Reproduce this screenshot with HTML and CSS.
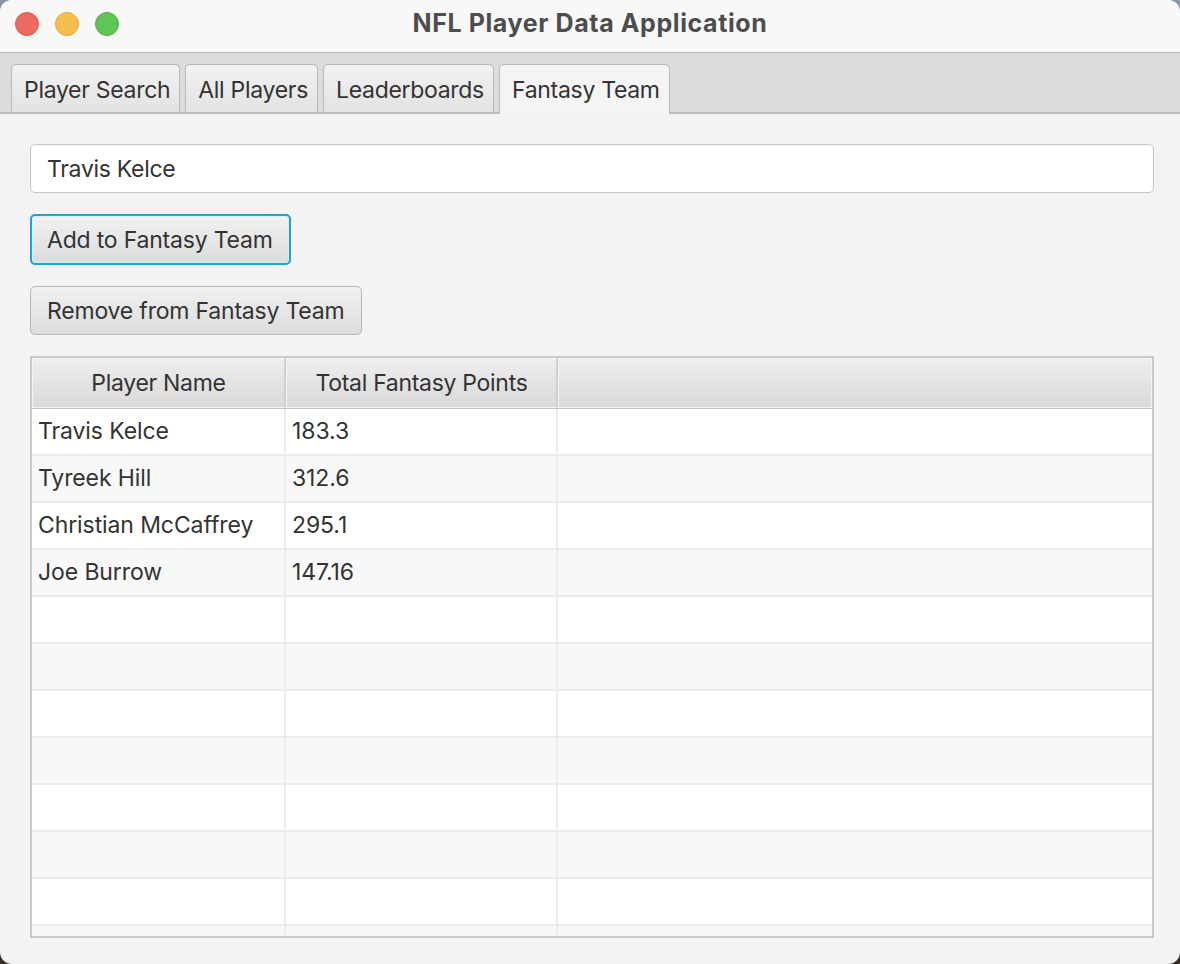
FILE: index.html
```html
<!DOCTYPE html>
<html>
<head>
<meta charset="utf-8">
<link rel="stylesheet" href="styles.css">
</head>
<body>
<div class="window">
  <div class="titlebar">
    <div class="lights">
      <span class="light red"></span>
      <span class="light yellow"></span>
      <span class="light green"></span>
    </div>
    <div class="title">NFL Player Data Application</div>
  </div>
  <div class="tabbar">
    <div class="tab">Player Search</div>
    <div class="tab">All Players</div>
    <div class="tab">Leaderboards</div>
    <div class="tab selected">Fantasy Team</div>
  </div>
  <div class="content">
    <div class="textfield">Travis Kelce</div>
    <div class="btn focused">Add to Fantasy Team</div>
    <div class="btn">Remove from Fantasy Team</div>
    <div class="table">
      <div class="thead">
        <div class="th c1">Player Name</div>
        <div class="th c2">Total Fantasy Points</div>
        <div class="th c3"></div>
      </div>
      <div class="tbody">
        <div class="tr"><div class="td c1">Travis Kelce</div><div class="td c2">183.3</div><div class="td c3"></div></div>
        <div class="tr"><div class="td c1">Tyreek Hill</div><div class="td c2">312.6</div><div class="td c3"></div></div>
        <div class="tr"><div class="td c1">Christian McCaffrey</div><div class="td c2">295.1</div><div class="td c3"></div></div>
        <div class="tr"><div class="td c1">Joe Burrow</div><div class="td c2">147.16</div><div class="td c3"></div></div>
        <div class="tr"><div class="td c1"></div><div class="td c2"></div><div class="td c3"></div></div>
        <div class="tr"><div class="td c1"></div><div class="td c2"></div><div class="td c3"></div></div>
        <div class="tr"><div class="td c1"></div><div class="td c2"></div><div class="td c3"></div></div>
        <div class="tr"><div class="td c1"></div><div class="td c2"></div><div class="td c3"></div></div>
        <div class="tr"><div class="td c1"></div><div class="td c2"></div><div class="td c3"></div></div>
        <div class="tr"><div class="td c1"></div><div class="td c2"></div><div class="td c3"></div></div>
        <div class="tr"><div class="td c1"></div><div class="td c2"></div><div class="td c3"></div></div>
        <div class="tr"><div class="td c1"></div><div class="td c2"></div><div class="td c3"></div></div>
      </div>
    </div>
  </div>
</div>
</body>
</html>
```
FILE: styles.css
```css
html, body {
  margin: 0;
  padding: 0;
  width: 1180px;
  height: 964px;
  overflow: hidden;
}
body {
  background: linear-gradient(#8797ab, #3b2f29);
  font-family: Inter, "Noto Sans", sans-serif;
  color: #333333;
}
.window {
  width: 1180px;
  height: 964px;
  border-radius: 12px;
  overflow: hidden;
  background: #f3f3f3;
  display: flex;
  flex-direction: column;
}
.titlebar {
  height: 52px;
  flex: none;
  background: #f8f8f8;
  border-bottom: 1px solid #b9b9b9;
  display: flex;
  align-items: center;
  justify-content: center;
  position: relative;
}
.lights {
  position: absolute;
  left: 15px;
  top: 12px;
  display: flex;
  gap: 16px;
}
.light {
  width: 24px;
  height: 24px;
  border-radius: 50%;
  box-sizing: border-box;
}
.red { background: #ee6a5f; border: 1px solid #dc5a50; }
.yellow { background: #f5bf4f; border: 1px solid #dfa63a; }
.green { background: #61c554; border: 1px solid #52ae45; }
.title {
  font-size: 25px;
  font-weight: 700;
  color: #4d4d4d;
  margin-top: -6px;
  letter-spacing: 0.6px;
}
.tabbar {
  flex: none;
  background: #dcdcdc;
  display: flex;
  align-items: flex-end;
  padding-left: 11px;
  gap: 5px;
  box-sizing: border-box;
  height: 61px;
  margin-bottom: -2px;
  box-shadow: inset 0 -2px 0 #bdbdbd;
}
.tab {
  height: 50px;
  box-sizing: border-box;
  padding: 0 9px 0 12px;
  display: flex;
  align-items: center;
  font-size: 23px;
  letter-spacing: -0.3px;
  color: #333;
  border: 1px solid #b8b8b8;
  border-bottom: none;
  border-radius: 5px 5px 0 0;
  background: linear-gradient(#f2f2f2, #e2e2e2);
  box-shadow: inset 0 -2px 0 #bdbdbd;
}
.tab.selected {
  background: #f4f4f4;
  box-shadow: none;
}
.content {
  flex: 1;
  padding: 32px 26px 26px 30px;
  display: flex;
  flex-direction: column;
  align-items: flex-start;
  min-height: 0;
}
.textfield {
  align-self: stretch;
  height: 49px;
  box-sizing: border-box;
  border: 1px solid #c6c6c6;
  border-radius: 5px;
  background: #ffffff;
  box-shadow: inset 0 1px 2px rgba(0,0,0,0.06);
  padding-left: 16px;
  display: flex;
  align-items: center;
  font-size: 23px;
  letter-spacing: -0.3px;
  color: #333;
}
.btn {
  margin-top: 21px;
  height: 49px;
  box-sizing: border-box;
  padding: 0 17px 0 16px;
  display: flex;
  align-items: center;
  font-size: 23px;
  letter-spacing: -0.2px;
  color: #333;
  border: 1px solid #b6b6b6;
  border-radius: 5px;
  background: linear-gradient(#f1f1f1, #dcdcdc);
}
.btn.focused {
  height: 51px;
  border: 2px solid #1aa3dc;
  box-shadow: inset 0 0 0 1px #d6eef8;
  padding: 0 16px 0 15px;
}
.table {
  margin-top: 21px;
  align-self: stretch;
  flex: 1;
  border: 2px solid #c9c9c9;
  background: #ffffff;
  display: flex;
  flex-direction: column;
  min-height: 0;
  overflow: hidden;
}
.thead {
  display: flex;
  height: 50px;
  flex: none;
  border-bottom: 1px solid #c4c4c4;
}
.th {
  box-sizing: border-box;
  background: linear-gradient(#eeeeee, #d9d9d9);
  border: 1px solid #f4f4f4;
  border-right: 2px solid #cfcfcf;
  display: flex;
  align-items: center;
  justify-content: center;
  font-size: 23px;
  letter-spacing: -0.3px;
  color: #333;
}
.th.c3 { border-right: 1px solid #f4f4f4; }
.c1 { width: 254px; flex: none; }
.c2 { width: 272px; flex: none; }
.c3 { flex: 1; }
.tbody {
  flex: 1;
  overflow: hidden;
  min-height: 0;
}
.tr {
  display: flex;
  height: 47px;
  box-sizing: border-box;
  border-bottom: 2px solid #ececec;
  background: #ffffff;
}
.tr:nth-child(even) { background: #f8f8f8; }
.td {
  box-sizing: border-box;
  border-right: 2px solid #ececec;
  display: flex;
  align-items: center;
  padding-left: 6px;
  padding-bottom: 2px;
  font-size: 23px;
  letter-spacing: -0.1px;
  color: #333;
}
.td.c3 { border-right: none; }
```
